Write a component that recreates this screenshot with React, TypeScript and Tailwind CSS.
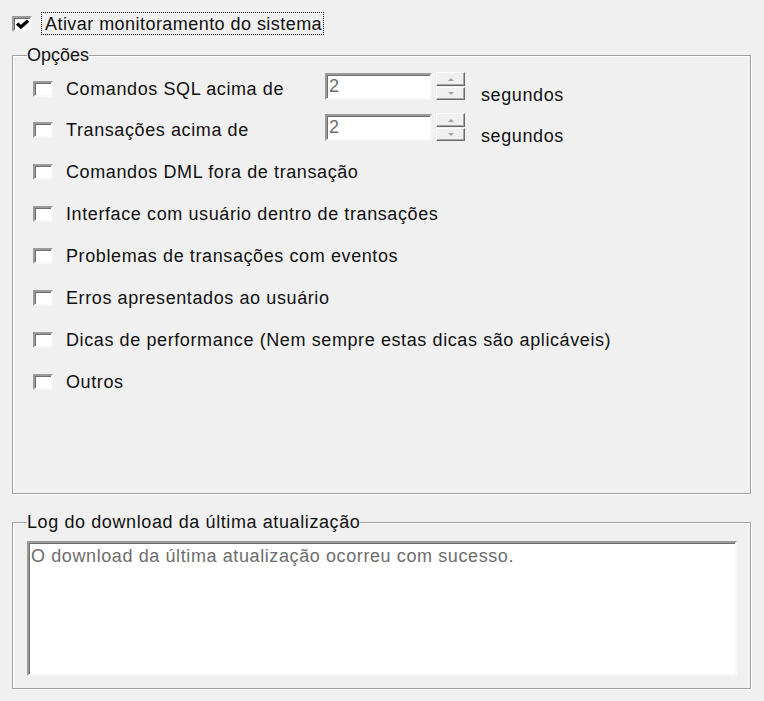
import React from "react";

const sunken =
  "border-2 border-t-[#9a9a9a] border-l-[#9a9a9a] border-r-[#f7f7f7] border-b-[#f7f7f7] bg-white shadow-[inset_1px_1px_0_#6e6e6e]";

function CheckBox({ checked }: { checked?: boolean }) {
  return (
    <span className={`flex h-[16px] w-[20px] shrink-0 items-center justify-center ${sunken}`}>
      {checked && (
        <svg viewBox="0 0 8 7" className="h-[10px] w-[13px]" preserveAspectRatio="none">
          <polyline points="0.7,3.2 3,5.6 7.4,1.1" fill="none" stroke="#000" strokeWidth="2.2" />
        </svg>
      )}
    </span>
  );
}

function SpinButton({ up }: { up?: boolean }) {
  return (
    <span
      className={`flex w-[29px] items-center justify-center border border-t-white border-l-white border-r-[#6a6a6a] border-b-[#6a6a6a] bg-[#f0f0f0] shadow-[inset_-1px_-1px_0_#a8a8a8] ${
        up ? "h-[14px]" : "h-[13px]"
      }`}
    >
      <svg viewBox="0 0 6 3" className="h-[3px] w-[6px]">
        <polygon points={up ? "0,3 6,3 3,0" : "0,0 6,0 3,3"} fill="#a0a0a0" />
      </svg>
    </span>
  );
}

function SpinBox({ value }: { value: string }) {
  return (
    <div className="-mt-[6px] flex items-center gap-[4px]">
      <div className={`h-[27px] w-[107px] pl-[2px] leading-[22px] text-[#6d6d6d] ${sunken}`}>{value}</div>
      <div className="flex flex-col gap-px">
        <SpinButton up />
        <SpinButton />
      </div>
    </div>
  );
}

function Option({ label, spin, first }: { label: string; spin?: boolean; first?: boolean }) {
  return (
    <div className={`flex items-center ${first ? "h-[40px]" : "h-[42px]"}`}>
      <CheckBox />
      <span className={`ml-[13px] whitespace-nowrap ${spin ? "w-[259px]" : ""}`}>{label}</span>
      {spin && (
        <>
          <SpinBox value="2" />
          <span className="ml-[16px] mt-[12px]">segundos</span>
        </>
      )}
    </div>
  );
}

const options = [
  "Comandos DML fora de transação",
  "Interface com usuário dentro de transações",
  "Problemas de transações com eventos",
  "Erros apresentados ao usuário",
  "Dicas de performance (Nem sempre estas dicas são aplicáveis)",
  "Outros",
];

const group =
  "m-0 w-[739px] border border-[#a0a0a0] p-0 shadow-[1px_1px_0_#fff,inset_1px_1px_0_#fff]";

export default function App() {
  return (
    <div className="h-[701px] w-[764px] overflow-hidden bg-[#f0f0f0] pl-[12px] pt-[12px] font-['Liberation_Sans',Arial,sans-serif] text-[18px] leading-[20px] tracking-[0.6px] text-[#111]">
      <div className="flex h-[23px] items-center">
        <CheckBox checked />
        <span className="ml-[9px] flex h-[23px] items-center whitespace-nowrap border border-dotted border-black pl-[3px] pr-[1px] tracking-[0.45px]">
          Ativar monitoramento do sistema
        </span>
      </div>

      <fieldset className={`mt-[10px] h-[449px] ${group}`}>
        <legend className="ml-[14px] bg-[#f0f0f0] p-0 leading-[20px] tracking-[0px]">Opções</legend>
        <div className="pl-[20px] pt-[4px]">
          <Option first label="Comandos SQL acima de" spin />
          <Option label="Transações acima de" spin />
          {options.map((o) => (
            <Option key={o} label={o} />
          ))}
        </div>
      </fieldset>

      <fieldset className={`mt-[18px] h-[177px] ${group}`}>
        <legend className="ml-[14px] bg-[#f0f0f0] p-0 leading-[20px]">Log do download da última atualização</legend>
        <div className="pl-[14px] pr-[13px] pt-[9px]">
          <div className={`h-[135px] pl-[2px] pt-[3px] leading-[21px] text-[#6d6d6d] ${sunken}`}>
            O download da última atualização ocorreu com sucesso.
          </div>
        </div>
      </fieldset>
    </div>
  );
}
